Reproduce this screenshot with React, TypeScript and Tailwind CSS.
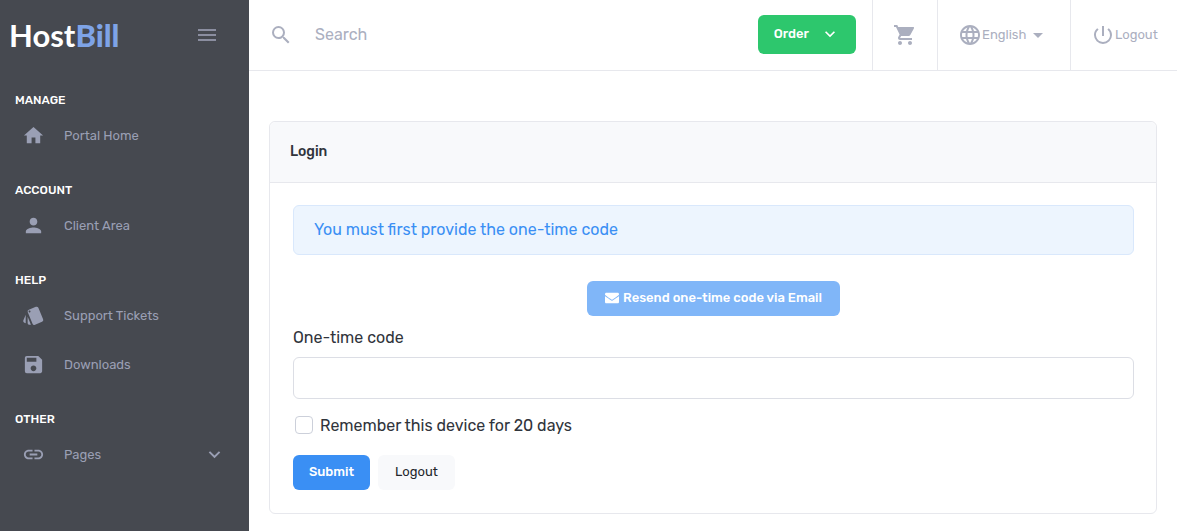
import { useState } from 'react';
import type { IconType } from 'react-icons';
import { FaEnvelope } from 'react-icons/fa';
import {
  MdArrowDropDown,
  MdExpandMore,
  MdHome,
  MdLanguage,
  MdLink,
  MdMenu,
  MdPerson,
  MdPowerSettingsNew,
  MdSave,
  MdSearch,
  MdShoppingCart,
  MdStyle,
} from 'react-icons/md';

interface NavItem {
  label: string;
  icon: IconType;
  expandable?: boolean;
}

interface NavSection {
  title: string;
  items: NavItem[];
}

const sections: NavSection[] = [
  { title: 'MANAGE', items: [{ label: 'Portal Home', icon: MdHome }] },
  { title: 'ACCOUNT', items: [{ label: 'Client Area', icon: MdPerson }] },
  {
    title: 'HELP',
    items: [
      { label: 'Support Tickets', icon: MdStyle },
      { label: 'Downloads', icon: MdSave },
    ],
  },
  { title: 'OTHER', items: [{ label: 'Pages', icon: MdLink, expandable: true }] },
];

function Sidebar() {
  return (
    <aside className="w-[249px] shrink-0 bg-[#464950]">
      <div className="flex h-[70px] items-center justify-between pl-[9px] pr-[30px]">
        <a href="#" className="font-['Lato',sans-serif] text-[31px] leading-9 font-bold text-white">
          Host<span className="font-black text-[#7ea3e6]">Bill</span>
        </a>
        <button type="button" aria-label="Toggle menu" className="text-[#8b8ea0]">
          <MdMenu size={24} />
        </button>
      </div>
      <nav>
        {sections.map(section => (
          <div key={section.title}>
            <h2 className="h-[41px] pt-5 pl-[15px] text-xs leading-5 font-medium text-white">{section.title}</h2>
            <ul>
              {section.items.map(({ label, icon: Icon, expandable }) => (
                <li key={label}>
                  <a href="#" className="flex h-[49px] items-center pr-[23px] pl-[22px] text-[13px] text-[#9a9fb4]">
                    <Icon size={23} />
                    <span className="ml-[19px] flex-1">{label}</span>
                    {expandable && <MdExpandMore size={23} />}
                  </a>
                </li>
              ))}
            </ul>
          </div>
        ))}
      </nav>
    </aside>
  );
}

function TopBar() {
  return (
    <header className="flex h-[71px] items-stretch border-b border-[#e7e8ed] text-[#abafbf]">
      <label className="flex min-w-0 flex-1 items-center pl-5">
        <MdSearch size={24} className="shrink-0" />
        <input
          type="search"
          aria-label="Search"
          placeholder="Search"
          className="ml-[22px] min-w-0 flex-1 text-base outline-none placeholder:text-[#abafbf]"
        />
      </label>
      <div className="flex items-start px-4 pt-[15px]">
        <button
          type="button"
          className="flex h-[39px] items-center justify-between rounded-md bg-[#2dc76d] px-4 pb-px text-[13px] font-medium text-white"
        >
          Order
          <MdExpandMore size={20} className="ml-[11px]" />
        </button>
      </div>
      <a href="#" aria-label="Cart" className="flex w-[65px] items-center justify-center border-l border-[#e7e8ed]">
        <MdShoppingCart size={24} />
      </a>
      <button type="button" className="flex w-[133px] items-center border-l border-[#e7e8ed] pl-5 text-[13px]">
        <MdLanguage size={24} />
        English
        <MdArrowDropDown size={24} />
      </button>
      <a href="#" className="flex w-[107px] items-center border-l border-[#e7e8ed] pl-5 text-[13px]">
        <MdPowerSettingsNew size={24} />
        Logout
      </a>
    </header>
  );
}

function LoginCard() {
  const [code, setCode] = useState('');
  const [remember, setRemember] = useState(false);

  return (
    <section className="rounded-md border border-[#e7e8ed]">
      <h1 className="rounded-t-md border-b border-[#e7e8ed] bg-[#f8f9fb] px-5 py-[18px] text-sm leading-6 font-medium text-[#30343b]">
        Login
      </h1>
      <form className="pt-[22px] pr-[22px] pb-[23px] pl-[23px]" onSubmit={e => e.preventDefault()}>
        <div className="rounded-md border border-[#d9e8fc] bg-[#edf5fe] px-5 py-3 text-base text-[#3a8ff4]">
          You must first provide the one-time code
        </div>
        <div className="mt-[26px] flex justify-center">
          <button
            type="button"
            className="flex h-[35px] items-center gap-1 rounded-md bg-[#80b6f8] px-[18px] pb-0.5 text-[13px] font-medium text-white"
          >
            <FaEnvelope size={14} />
            Resend one-time code via Email
          </button>
        </div>
        <label htmlFor="code" className="mt-[10px] block text-base text-[#30343b]">
          One-time code
        </label>
        <input
          id="code"
          type="text"
          value={code}
          onChange={e => setCode(e.target.value)}
          className="mt-[7px] block h-[42px] w-full rounded-md border border-[#dcdee5] px-3 text-base outline-none"
        />
        <div className="mt-[15px] ml-[2px] flex items-start">
          <input
            id="remember"
            type="checkbox"
            checked={remember}
            onChange={e => setRemember(e.target.checked)}
            className="mt-0.5 size-[18px] appearance-none rounded-sm border border-[#ccd0da] checked:bg-[#3a8ff4]"
          />
          <label htmlFor="remember" className="ml-[7px] text-base text-[#30343b]">
            Remember this device for 20 days
          </label>
        </div>
        <div className="mt-[17px] flex gap-2">
          <button
            type="submit"
            className="h-[35px] w-[77px] rounded-md bg-[#3a8ff4] pb-0.5 text-[13px] font-medium text-white"
          >
            Submit
          </button>
          <button type="button" className="h-[35px] w-[77px] rounded-md bg-[#f8f9fb] pb-0.5 text-[13px] text-[#24272c]">
            Logout
          </button>
        </div>
      </form>
    </section>
  );
}

export default function App() {
  return (
    <div className="flex min-h-screen bg-white font-['Rubik','Roboto',sans-serif]">
      <Sidebar />
      <div className="min-w-0 flex-1">
        <TopBar />
        <main className="px-5 pt-[50px] pb-4">
          <LoginCard />
        </main>
      </div>
    </div>
  );
}
